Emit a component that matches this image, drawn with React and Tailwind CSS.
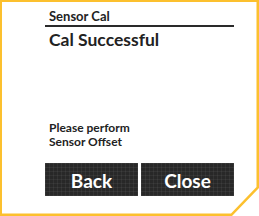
export default function App() {
  return (
    <div className="relative w-[259px] h-[216px] bg-white overflow-hidden" style={{ fontFamily: 'Lato, "Liberation Sans", sans-serif' }}>
      <svg className="absolute inset-0 pointer-events-none" width="259" height="216" viewBox="0 0 259 216">
        <path
          fillRule="evenodd"
          fill="#fcc02e"
          d="M0 0 H259 V188 L232 216 H0 Z M2 2 V213.5 H231 L256.5 187 V2 Z"
        />
      </svg>
      <div className="flex flex-col h-full pl-[45px] pr-[25px] pt-[9px] pb-[20px]">
        <div className="border-b-2 border-[#2a2a2a] pb-[2px]">
          <div className="pl-[4px] text-[13px] leading-[14px] font-bold text-[#222]">Sensor Cal</div>
        </div>
        <div className="mt-[2px] pl-[4px] text-[17.5px] leading-[22px] font-bold text-[#222]">Cal Successful</div>
        <div className="mt-auto pl-[4px] text-[12px] leading-[14px] font-bold text-[#222]">
          <div>Please perform</div>
          <div>Sensor Offset</div>
        </div>
        <div className="mt-[14px] grid grid-cols-2 gap-[3px]">
          <button className="h-[33px] bg-[#282828] bg-[linear-gradient(rgba(255,255,255,0.05)_1px,transparent_1px),linear-gradient(90deg,rgba(255,255,255,0.05)_1px,transparent_1px)] bg-[size:4px_4px] text-white text-[19px] leading-[33px] font-bold pt-[1px]">
            Back
          </button>
          <button className="h-[33px] bg-[#282828] bg-[linear-gradient(rgba(255,255,255,0.05)_1px,transparent_1px),linear-gradient(90deg,rgba(255,255,255,0.05)_1px,transparent_1px)] bg-[size:4px_4px] text-white text-[19px] leading-[33px] font-bold pt-[1px]">
            Close
          </button>
        </div>
      </div>
    </div>
  );
}
